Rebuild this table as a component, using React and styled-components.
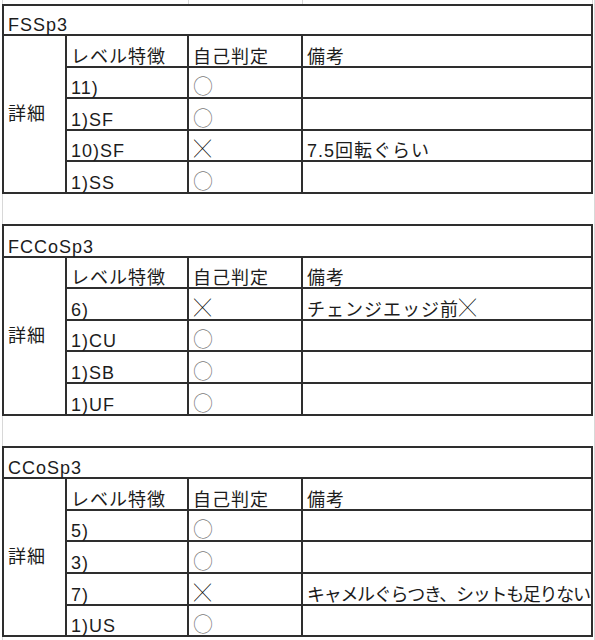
import React from "react";
import styled, { createGlobalStyle } from "styled-components";

const GlobalStyle = createGlobalStyle`
  html, body { margin: 0; padding: 0; background: #fff; }
  body {
    font-family: "Liberation Sans", "Noto Sans CJK JP", sans-serif;
    color: #1c1c1c;
  }
`;

const LINE = "#2e2e2e";
const GRID = "#d8d8d8";

const Sheet = styled.div`
  width: 595px;
  min-height: 640px;
  display: flex;
  flex-direction: column;
  padding-left: 2px;
  box-sizing: border-box;
  background:
    linear-gradient(${GRID}, ${GRID}) 2px 0 / 1px 100% no-repeat,
    linear-gradient(${GRID}, ${GRID}) 594px 0 / 1px 100% no-repeat,
    #fff;
`;

const TopStrip = styled.div`
  display: grid;
  grid-template-columns: 65px 122px 114px 290px;
  height: 4px;
`;

const StripCell = styled.div`
  border-right: 1px solid ${GRID};
  &:first-child { border-right: none; }
`;

const Block = styled.div`
  display: grid;
  grid-template-columns: 63px 122px 114px 290px;
  grid-template-rows: ${(p) => (p.$first ? "30px" : "31.6px")} repeat(5, 31.6px);
  width: max-content;
  border-top: 2px solid ${LINE};
  border-left: 2px solid ${LINE};
  background: #fff;
  & + & { margin-top: 30px; }
`;

const Cell = styled.div`
  box-sizing: border-box;
  display: flex;
  align-items: ${(p) => (p.$center ? "center" : "flex-end")};
  padding: 0 2px 0 4px;
  border-right: 2px solid ${LINE};
  border-bottom: 2px solid ${LINE};
  font-size: 18px;
  line-height: ${(p) => (p.$center ? "20px" : "17px")};
  letter-spacing: ${(p) => (p.$tight ? "-1.3px" : "1px")};
  white-space: nowrap;
  grid-column: ${(p) => (p.$span ? "1 / -1" : "auto")};
  grid-row: ${(p) => (p.$center ? "2 / span 5" : "auto")};
`;

const Line = styled.span`
  display: block;
`;

const Circle = styled.span`
  font-family: "Noto Sans CJK JP", sans-serif;
  font-size: 20px;
  line-height: 0;
  letter-spacing: 0;
  color: #7a7a7a;
  font-weight: 300;
`;

const Cross = styled.span`
  font-family: "Noto Sans CJK JP", sans-serif;
  font-size: 17px;
  line-height: 0;
  letter-spacing: 0;
  color: #000;
  font-weight: 300;
  vertical-align: 2px;
  margin-left: ${(p) => (p.$inline ? "0" : "1px")};
`;

function C({ children, ...rest }) {
  return (
    <Cell {...rest}>
      <Line>{children}</Line>
    </Cell>
  );
}

const tables = [
  {
    title: "FSSp3",
    rows: [
      ["11)", true, ""],
      ["1)SF", true, ""],
      ["10)SF", false, "7.5回転ぐらい"],
      ["1)SS", true, ""],
    ],
  },
  {
    title: "FCCoSp3",
    rows: [
      ["6)", false, <>チェンジエッジ前<Cross $inline>╳</Cross></>],
      ["1)CU", true, ""],
      ["1)SB", true, ""],
      ["1)UF", true, ""],
    ],
  },
  {
    title: "CCoSp3",
    rows: [
      ["5)", true, ""],
      ["3)", true, ""],
      ["7)", false, "キャメルぐらつき、シットも足りない", true],
      ["1)US", true, ""],
    ],
  },
];

function Table({ data, first }) {
  return (
    <Block $first={first}>
      <C $span>{data.title}</C>
      <C $center>詳細</C>
      <C>レベル特徴</C>
      <C>自己判定</C>
      <C>備考</C>
      {data.rows.map(([level, ok, note, tight], i) => (
        <React.Fragment key={i}>
          <C>{level}</C>
          <C>{ok ? <Circle>○</Circle> : <Cross>╳</Cross>}</C>
          <C $tight={tight}>{note}</C>
        </React.Fragment>
      ))}
    </Block>
  );
}

export default function App() {
  return (
    <>
      <GlobalStyle />
      <Sheet>
        <TopStrip>
          <StripCell />
          <StripCell />
          <StripCell />
          <StripCell />
        </TopStrip>
        {tables.map((t, i) => (
          <Table key={t.title} data={t} first={i === 0} />
        ))}
      </Sheet>
    </>
  );
}
